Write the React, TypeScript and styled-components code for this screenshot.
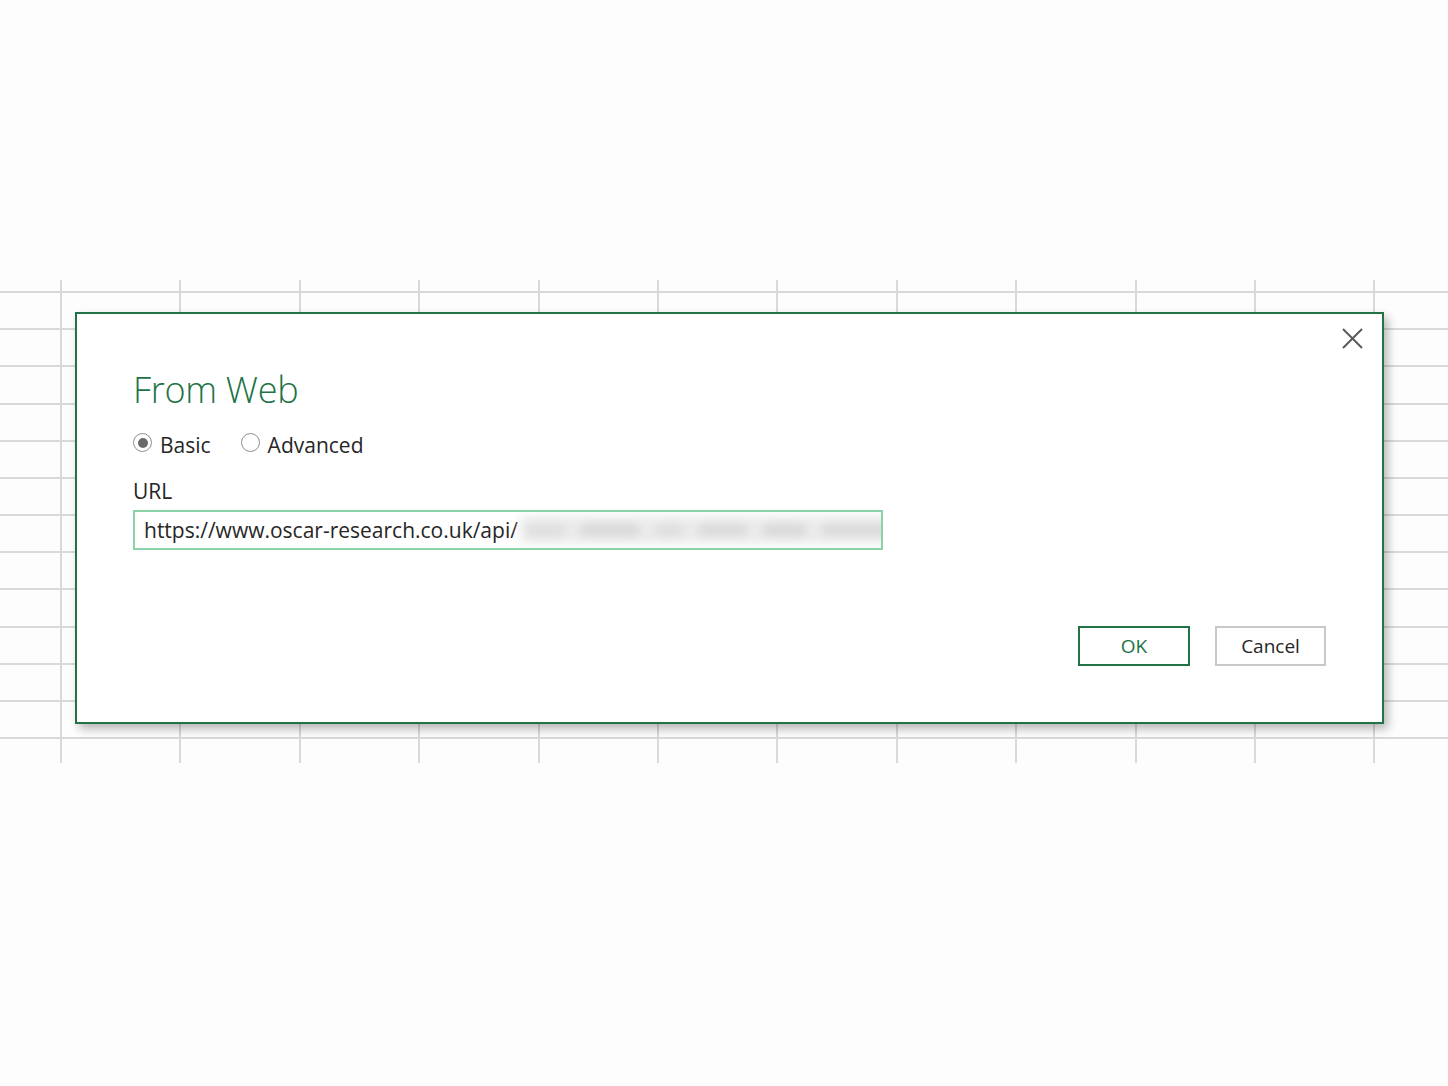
import React from "react";
import styled, { createGlobalStyle } from "styled-components";

const Global = createGlobalStyle`
  html, body { margin: 0; padding: 0; background: #fdfdfd; }
  body { font-family: "Open Sans", "Noto Sans", Arial, sans-serif; }
`;

const Page = styled.div`
  width: 1448px;
  height: 1086px;
  padding-top: 280px;
  box-sizing: border-box;
  background: #fdfdfd;
`;

const Sheet = styled.div`
  height: 483px;
  padding: 32px 0 0 75px;
  box-sizing: border-box;
  background-image:
    repeating-linear-gradient(
      to bottom,
      transparent 0px,
      transparent 11px,
      #d9d9d9 11px,
      #d9d9d9 13px,
      transparent 13px,
      transparent 37.17px
    ),
    repeating-linear-gradient(
      to right,
      transparent 0px,
      transparent 60px,
      #d9d9d9 60px,
      #d9d9d9 62px,
      transparent 62px,
      transparent 119.4px
    );
  background-size: 100% 460px, 100% 100%;
  background-repeat: no-repeat;
`;

const Dialog = styled.div`
  position: relative;
  width: 1309px;
  height: 412px;
  box-sizing: border-box;
  border: 2px solid #217346;
  background: #ffffff;
  box-shadow: 4px 5px 9px rgba(0, 0, 0, 0.28);
  padding: 54px 56px 56px 56px;
  display: flex;
  flex-direction: column;
`;

const Close = styled.button`
  position: absolute;
  top: 12px;
  right: 18px;
  width: 24px;
  height: 24px;
  padding: 0;
  border: none;
  background: transparent;
  display: flex;
  align-items: center;
  justify-content: center;
`;

const Title = styled.h1`
  margin: 0;
  font-family: "Open Sans", sans-serif;
  font-weight: 300;
  font-size: 36px;
  line-height: 44px;
  color: #217346;
  letter-spacing: -0.3px;
`;

const RadioRow = styled.div`
  display: flex;
  align-items: center;
  gap: 30px;
  margin-top: 19px;
`;

const RadioLabel = styled.label`
  display: flex;
  align-items: center;
  gap: 8px;
  font-size: 21px;
  line-height: 28px;
  color: #262626;
`;

const Circle = styled.span<{ $checked?: boolean }>`
  width: 19px;
  height: 19px;
  box-sizing: border-box;
  border-radius: 50%;
  border: 1.5px solid #8f8f8f;
  display: flex;
  align-items: center;
  justify-content: center;
  margin-top: -5px;
  &::after {
    content: "";
    width: 10px;
    height: 10px;
    border-radius: 50%;
    background: ${(p) => (p.$checked ? "#6a6a6a" : "transparent")};
  }
`;

const FieldLabel = styled.div`
  margin-top: 19px;
  font-size: 21px;
  line-height: 26px;
  color: #262626;
`;

const UrlBox = styled.div`
  margin-top: 6px;
  width: 750px;
  height: 40px;
  box-sizing: border-box;
  border: 2px solid #8ad3a6;
  display: flex;
  align-items: center;
  padding: 0 4px 0 9px;
  font-size: 21px;
  color: #262626;
  overflow: hidden;
`;

const UrlText = styled.span`
  white-space: nowrap;
`;

const Blurred = styled.span`
  flex: 1;
  height: 28px;
  margin-left: 2px;
  background: #ececec;
  display: flex;
  align-items: center;
  gap: 14px;
  padding: 0 6px;
  filter: blur(5px);
`;

const Smudge = styled.span<{ $w: number; $shade: string }>`
  width: ${(p) => p.$w}px;
  height: 12px;
  background: ${(p) => p.$shade};
  border-radius: 5px;
`;

const Buttons = styled.div`
  margin-top: auto;
  display: flex;
  justify-content: flex-end;
  gap: 25px;
`;

const Btn = styled.button<{ $primary?: boolean }>`
  width: ${(p) => (p.$primary ? "112px" : "111px")};
  height: 40px;
  box-sizing: border-box;
  background: #fff;
  border: 2px solid ${(p) => (p.$primary ? "#217346" : "#c8c8c8")};
  color: ${(p) => (p.$primary ? "#217346" : "#262626")};
  font-family: "Open Sans", sans-serif;
  font-size: 19px;
  padding: 0;
`;

const smudges: Array<[number, string]> = [
  [40, "#dedede"],
  [60, "#d8d8d8"],
  [30, "#dedede"],
  [50, "#dadada"],
  [45, "#d8d8d8"],
  [70, "#dadada"],
];

export default function App() {
  return (
    <>
      <Global />
      <Page>
        <Sheet>
          <Dialog>
            <Close aria-label="Close">
              <svg width="21" height="21" viewBox="0 0 21 21">
                <path d="M1 1 L20 20 M20 1 L1 20" stroke="#5a5a5a" strokeWidth="2" fill="none" />
              </svg>
            </Close>
            <Title>From Web</Title>
            <RadioRow>
              <RadioLabel>
                <Circle $checked />
                Basic
              </RadioLabel>
              <RadioLabel>
                <Circle />
                Advanced
              </RadioLabel>
            </RadioRow>
            <FieldLabel>URL</FieldLabel>
            <UrlBox>
              <UrlText>https://www.oscar-research.co.uk/api/</UrlText>
              <Blurred>
                {smudges.map(([w, s], i) => (
                  <Smudge key={i} $w={w} $shade={s} />
                ))}
              </Blurred>
            </UrlBox>
            <Buttons>
              <Btn $primary>OK</Btn>
              <Btn>Cancel</Btn>
            </Buttons>
          </Dialog>
        </Sheet>
      </Page>
    </>
  );
}
